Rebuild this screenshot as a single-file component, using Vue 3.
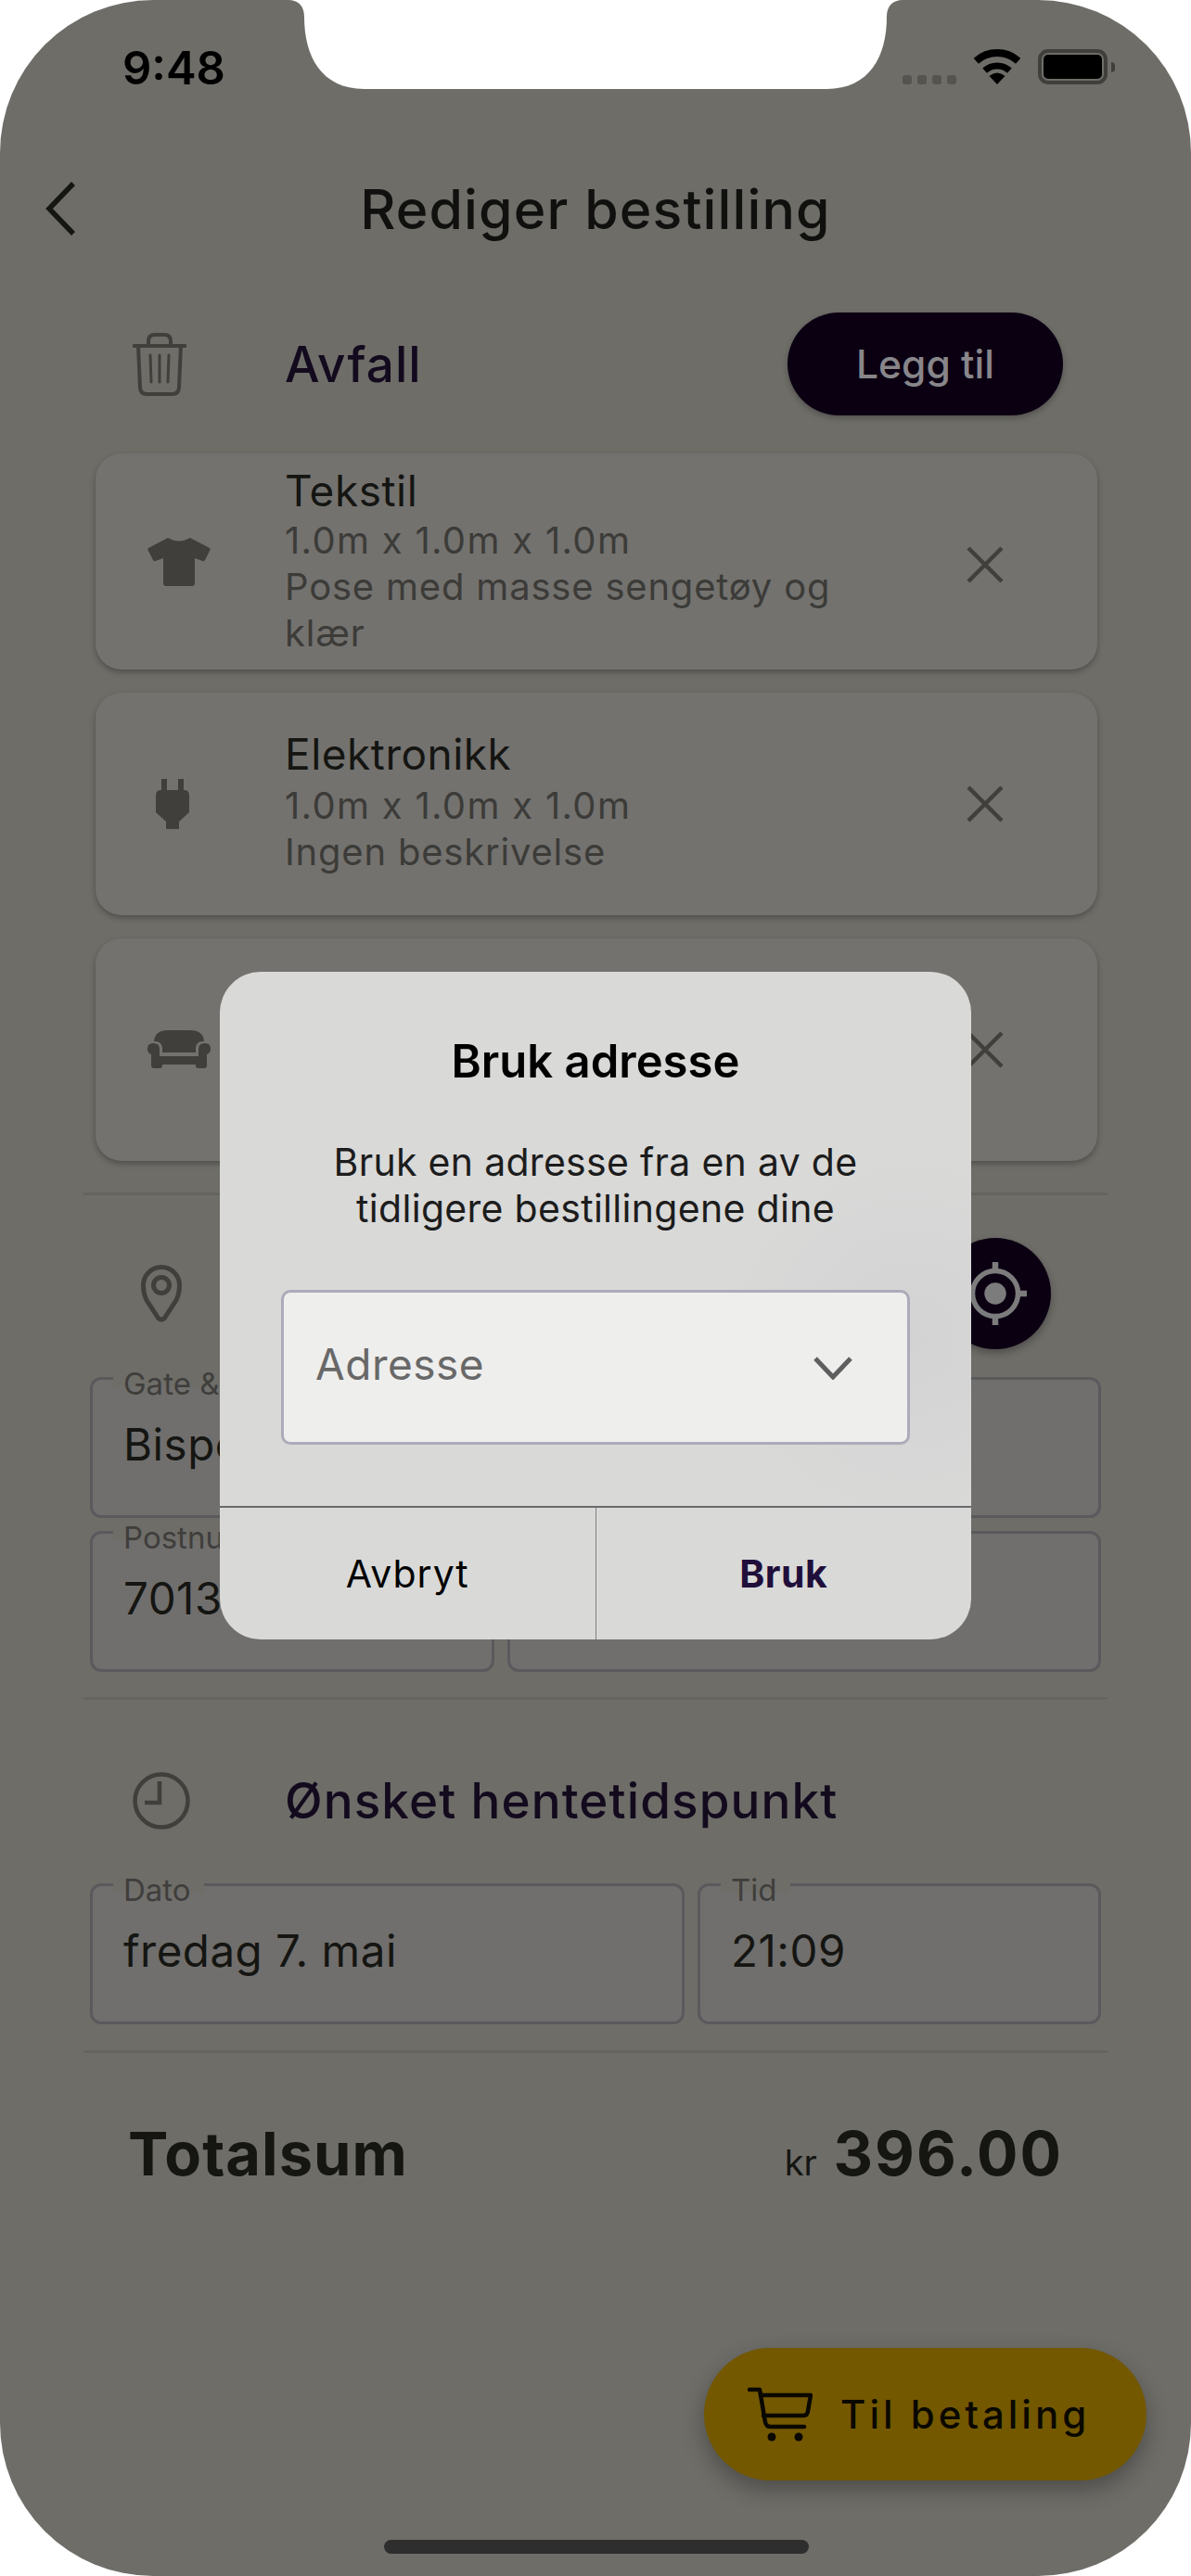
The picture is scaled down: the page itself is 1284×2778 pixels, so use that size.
<script setup>
const items = [
  { id: 'tekstil', title: 'Tekstil', size: '1.0m x 1.0m x 1.0m', desc: 'Pose med masse sengetøy og klær', short: true },
  { id: 'elektronikk', title: 'Elektronikk', size: '1.0m x 1.0m x 1.0m', desc: 'Ingen beskrivelse' },
  // third card sits behind the dialog, its text is never visible
  { id: 'mobler' },
];
</script>

<template>
  <div class="phone">
    <svg class="notch" width="662" height="96" viewBox="0 0 662 96">
      <path d="M0 0C10 0 17 6 17 18C17 60 35 96 82 96L580 96C627 96 645 60 645 18C645 6 652 0 662 0Z" fill="#fff" />
    </svg>

    <div class="status">
      <span class="time">9:48</span>
      <div class="status-right">
        <div class="dots"><i></i><i></i><i></i><i></i></div>
        <svg width="50" height="38" viewBox="0 0 50 38" class="wifi">
          <path d="M2.3 12.7A34 34 0 0 1 47.7 12.7" fill="none" stroke="#000" stroke-width="8" />
          <path d="M11.6 23.1A20 20 0 0 1 38.4 23.1" fill="none" stroke="#000" stroke-width="7" />
          <path d="M25 38L16.5 29Q25 22 33.500 29Z" fill="#000" />
        </svg>
        <div class="battery"><span></span></div>
      </div>
    </div>

    <header class="topbar">
      <svg class="back" width="33" height="58" viewBox="0 0 33 58">
        <path d="M30 2L4 29L30 56" fill="none" stroke="#151512" stroke-width="5.500" />
      </svg>
      <h1>Rediger bestilling</h1>
    </header>

    <section class="row-head first">
      <span class="head-icon">
        <svg width="58" height="68" viewBox="0 0 58 68" fill="none" stroke="#403f3c" stroke-width="4" stroke-linecap="round">
          <path d="M1.500 14H56.500" />
          <path d="M6 14L8 59Q8.500 66 15 66H43Q49.500 66 50 59L52 14" />
          <path d="M17 14V9Q17 2 24 2H34Q41 2 41 9V14" />
          <path d="M19 24L20 53M29 24V53M39 24L38 53" stroke-width="3" />
        </svg>
      </span>
      <h2>Avfall</h2>
      <button class="add-btn">Legg til</button>
    </section>

    <div class="cards">
      <div v-for="item in items" :key="item.id" class="card" :class="{ short: item.short }">
        <span class="card-icon">
          <svg v-if="item.id === 'tekstil'" width="68" height="54" viewBox="0 0 68 54">
            <path d="M22 1Q34 8 46 1L67 12Q68 13 67.500 14L62 25Q61 26.500 59.500 26L51 23V50Q51 53 48 53H20Q17 53 17 50V23L8.500 26Q7 26.500 6 25L.5 14Q0 13 1 12Z" fill="#403f3c" />
          </svg>
          <svg v-else-if="item.id === 'elektronikk'" class="plug" width="36" height="54" viewBox="0 0 36 54">
            <path d="M6 0H12V12H24V0H30V12H31Q36 12 36 18V36L25 46V54H11V46L0 36V18Q0 12 5 12H6Z" fill="#403f3c" />
          </svg>
          <svg v-else width="68" height="42" viewBox="0 0 68 42">
            <path d="M7 12Q8 0 22 0H46Q60 0 61 12Q53 11 52 19V24H16V19Q15 11 7 12Z" fill="#403f3c" />
            <path d="M0 20Q0 14 6 14Q13 14 13 20V28H55V20Q55 14 62 14Q68 14 68 20Q68 25 64 26V38Q64 41 61 41H55Q52 41 52 38V37H16V38Q16 41 13 41H7Q4 41 4 38V26Q0 25 0 20Z" fill="#403f3c" />
          </svg>
        </span>
        <div class="card-text">
          <template v-if="item.title">
            <div class="card-title">{{ item.title }}</div>
            <div class="card-sub">{{ item.size }}</div>
            <div class="card-sub desc">{{ item.desc }}</div>
          </template>
        </div>
        <svg class="remove" width="40" height="40" viewBox="0 0 40 40">
          <path d="M2 2L38 38M38 2L2 38" fill="none" stroke="#403f3c" stroke-width="4.500" />
        </svg>
      </div>
    </div>

    <div class="divider first-div"></div>

    <section class="row-head loc">
      <span class="head-icon">
        <svg width="44" height="62" viewBox="0 0 44 62" fill="none" stroke="#403f3c" stroke-width="5">
          <path d="M22 59Q19.500 59 18 56.500L6 38Q2.500 31 2.500 22A19.500 19.500 0 0 1 41.500 22Q41.500 31 38 38L26 56.500Q24.500 59 22 59Z" />
          <circle cx="22" cy="22" r="8.500" />
        </svg>
      </span>
      <button class="locate-btn">
        <svg width="72" height="72" viewBox="0 0 72 72">
          <circle cx="36" cy="36" r="24.500" fill="none" stroke="#7d7c7d" stroke-width="5.500" />
          <circle cx="36" cy="36" r="11.700" fill="#7d7c7d" />
          <path d="M36 2V10M36 62V70M2 36H10M62 36H70" stroke="#7d7c7d" stroke-width="6.500" />
        </svg>
      </button>
    </section>

    <div class="fields">
      <div class="field wide"><label>Gate &amp;</label><span>Bispe</span></div>
    </div>
    <div class="fields second">
      <div class="field post"><label>Postnu</label><span>7013</span></div>
      <div class="field grow"></div>
    </div>

    <div class="divider addr-div"></div>

    <section class="row-head time-head">
      <span class="head-icon">
        <svg width="62" height="62" viewBox="0 0 62 62" fill="none" stroke="#403f3c" stroke-width="4.500">
          <circle cx="31" cy="31" r="28.500" />
          <path d="M29 10V33H13" />
        </svg>
      </span>
      <h2>Ønsket hentetidspunkt</h2>
    </section>

    <div class="fields">
      <div class="field date"><label>Dato</label><span>fredag 7. mai</span></div>
      <div class="field grow"><label>Tid</label><span>21:09</span></div>
    </div>

    <div class="divider time-div"></div>

    <div class="total">
      <span class="total-label">Totalsum</span>
      <span class="total-sum"><small>kr</small> 396.00</span>
    </div>

    <button class="pay-btn">
      <svg width="70" height="60" viewBox="0 0 70 60" fill="none" stroke="#0a0800" stroke-width="4.500" stroke-linecap="round" stroke-linejoin="round">
        <path d="M2 3H13L19 38Q20 43 25 43H61" />
        <path d="M14 9H68L65 26Q64.500 31 60 31H17" />
        <circle cx="26" cy="54" r="4.500" fill="#0a0800" stroke="none" />
        <circle cx="55" cy="54" r="4.500" fill="#0a0800" stroke="none" />
      </svg>
      <span>Til betaling</span>
    </button>

    <div class="home-bar"></div>

    <div class="modal">
      <h3>Bruk adresse</h3>
      <p>Bruk en adresse fra en av de<br />tidligere bestillingene dine</p>
      <div class="select">
        <span>Adresse</span>
        <svg width="42" height="26" viewBox="0 0 42 26">
          <path d="M2 3L21 23L40 3" fill="none" stroke="#5f5f5f" stroke-width="5" />
        </svg>
      </div>
      <div class="actions">
        <button class="cancel">Avbryt</button>
        <button class="use">Bruk</button>
      </div>
    </div>
  </div>
</template>

<style>
html,
body {
  margin: 0;
  background: #fff;
}
</style>

<style scoped>
.phone {
  position: relative;
  width: 1284px;
  height: 2778px;
  overflow: hidden;
  background: #6e6d68;
  border-radius: 165px;
  font-family: Inter, "Noto Sans", sans-serif;
  color: #151512;
}

.notch {
  position: absolute;
  top: 0;
  left: 311px;
}

.status {
  height: 175px;
  box-sizing: border-box;
  padding: 48px 90px 0 132px;
  display: flex;
  justify-content: space-between;
  align-items: flex-start;
}
.time {
  font-size: 49px;
  line-height: 52px;
  font-weight: 600;
  color: #000;
}
.status-right {
  display: flex;
  align-items: flex-start;
  padding-top: 5px;
}
.dots {
  display: flex;
  gap: 6px;
  margin-top: 28px;
  margin-right: 19px;
}
.dots i {
  width: 10px;
  height: 10px;
  border-radius: 3px;
  background: #555450;
}
.wifi {
  margin-right: 19px;
}
.battery {
  position: relative;
  width: 75px;
  height: 38px;
  box-sizing: border-box;
  border: 4px solid #403f3c;
  border-radius: 11px;
  padding: 2px;
}
.battery span {
  display: block;
  height: 100%;
  border-radius: 5px;
  background: #000;
}
.battery::after {
  content: "";
  position: absolute;
  right: -12px;
  top: 10px;
  width: 4px;
  height: 11px;
  border-radius: 0 6px 6px 0;
  background: #403f3c;
}

.topbar {
  height: 100px;
  display: flex;
  align-items: center;
  justify-content: center;
  position: relative;
}
.back {
  position: absolute;
  left: 49px;
  top: 21px;
}
h1 {
  margin: 0;
  font-size: 59px;
  font-weight: 450;
  letter-spacing: 1.100px;
  color: #10100e;
}

.row-head {
  display: flex;
  align-items: center;
}
.row-head.first {
  margin-top: 62px;
  height: 111px;
}
.head-icon {
  width: 307px;
  padding-left: 143px;
  box-sizing: border-box;
  display: flex;
}
.loc .head-icon {
  padding-left: 152px;
}
h2 {
  margin: 0;
  font-size: 53px;
  font-weight: 450;
  color: #130a1e;
  letter-spacing: 1.100px;
}
.add-btn {
  margin-left: auto;
  margin-right: 138px;
  width: 297px;
  height: 111px;
  border: 0;
  border-radius: 56px;
  background: #0b0012;
  color: #88868a;
  font: 500 42.500px Inter, sans-serif;
  box-shadow: 0 3px 6px rgba(0, 0, 0, 0.25);
}

.cards {
  margin: 41px 101px 0 103px;
  display: flex;
  flex-direction: column;
  gap: 25px;
}
.card {
  height: 240px;
  display: flex;
  align-items: center;
  background: #73726f;
  border-radius: 28px;
  box-shadow: 0 3px 6px rgba(0, 0, 0, 0.28);
}
.card.short {
  height: 233px;
}
.card.short .remove {
  margin-top: 6px;
}
.card.short .card-text {
  margin-top: -2px;
}
.card-icon {
  width: 204px;
  padding-left: 56px;
  box-sizing: border-box;
  display: flex;
}
.card-text {
  width: 640px;
  margin-top: -4px;
}
.card-title {
  font-size: 46px;
  line-height: 54px;
  letter-spacing: 0.5px;
  margin-bottom: 4px;
}
.card.short .card-title {
  margin-bottom: 2px;
}
.card-sub {
  font-size: 40px;
  line-height: 50px;
  letter-spacing: 1.300px;
  color: #3c3b38;
}
.card-sub.desc {
  max-width: 600px;
  letter-spacing: 0.800px;
}
.plug {
  margin-left: 9px;
}
.remove {
  margin-left: 95px;
}

.divider {
  height: 3px;
  margin: 0 90px;
  background: #65645f;
}
.first-div {
  margin-top: 34px;
}
.addr-div {
  margin-top: 27px;
}
.time-div {
  margin-top: 28px;
}

.row-head.loc {
  margin-top: 46px;
  height: 120px;
}
.locate-btn {
  margin-left: auto;
  margin-right: 151px;
  width: 120px;
  height: 120px;
  padding: 0;
  border: 0;
  border-radius: 50%;
  background: #0b0012;
  display: flex;
  align-items: center;
  justify-content: center;
  box-shadow: 0 4px 8px rgba(0, 0, 0, 0.3);
}

.fields {
  margin: 30px 97px 0;
  display: flex;
  gap: 14px;
}
.fields.second {
  margin-top: 14px;
}
.field {
  position: relative;
  height: 152px;
  box-sizing: border-box;
  border: 3px solid #5a5a5c;
  border-radius: 12px;
  background: #706f6d;
  padding: 40px 33px 0;
  font-size: 47.500px;
  line-height: 60px;
  letter-spacing: 0.500px;
}
.field label {
  position: absolute;
  top: -14px;
  left: 22px;
  padding: 0 14px 0 11px;
  height: 22px;
  line-height: 36px;
  font-size: 33px;
  letter-spacing: 0;
  color: #3f3e3c;
  background: #6e6d68;
}
.wide,
.grow {
  flex: 1;
}
.post {
  width: 436px;
}
.date {
  width: 641px;
}

.row-head.time-head {
  margin-top: 78px;
  height: 62px;
}
.time-head + .fields {
  margin-top: 58px;
}

.total {
  margin: 68px 138px 0 138px;
  display: flex;
  justify-content: space-between;
  align-items: baseline;
  font-weight: 700;
}
.total-label {
  font-size: 65px;
  letter-spacing: 1px;
}
.total-sum {
  font-size: 66px;
  letter-spacing: 2px;
}
.total-sum small {
  font-size: 38px;
  font-weight: 400;
  letter-spacing: 0;
}

.pay-btn {
  position: absolute;
  left: 759px;
  top: 2532px;
  width: 477px;
  height: 143px;
  border: 0;
  border-radius: 72px;
  background: #735800;
  display: flex;
  align-items: center;
  padding: 0 0 0 47px;
  gap: 30px;
  color: #0a0800;
  font: 500 42px Inter, sans-serif;
  letter-spacing: 4px;
  box-shadow: 0 10px 24px rgba(0, 0, 0, 0.3);
}

.home-bar {
  position: absolute;
  left: 414px;
  top: 2739px;
  width: 458px;
  height: 15px;
  border-radius: 8px;
  background: #2e2e2e;
}

.modal {
  position: absolute;
  left: 237px;
  top: 1048px;
  width: 810px;
  height: 720px;
  border-radius: 44px;
  overflow: hidden;
  color: #1c1c1c;
  background: radial-gradient(circle at 92% 55%, #d3d3d4, rgba(211, 211, 212, 0) 24%), #d9d9d8;
  text-align: center;
  display: flex;
  flex-direction: column;
}
.modal h3 {
  margin: 67px 0 0;
  font-size: 49px;
  line-height: 60px;
  font-weight: 600;
  color: #000;
}
.modal p {
  margin: 53px 0 0;
  font-size: 41px;
  line-height: 50px;
  letter-spacing: 0.300px;
}
.select {
  margin: 63px 66px 0;
  height: 167px;
  box-sizing: border-box;
  border: 3px solid #aeaab8;
  border-radius: 10px;
  background: #eeeeed;
  display: flex;
  align-items: center;
  justify-content: space-between;
  padding: 0 59px 0 34px;
  font-size: 46px;
  letter-spacing: 0.5px;
  color: #686868;
}
.select span {
  margin-bottom: 8px;
}
.actions {
  margin-top: 66px;
  flex: 1;
  display: flex;
  border-top: 2px solid #6a6a6c;
}
.actions button {
  flex: 1;
  border: 0;
  background: transparent;
  font: 400 41px Inter, sans-serif;
  letter-spacing: 1px;
  color: #000;
}
.actions .use {
  border-left: 1px solid #808080;
  font-weight: 700;
  letter-spacing: 0.5px;
  color: #1f0f3a;
}
</style>
